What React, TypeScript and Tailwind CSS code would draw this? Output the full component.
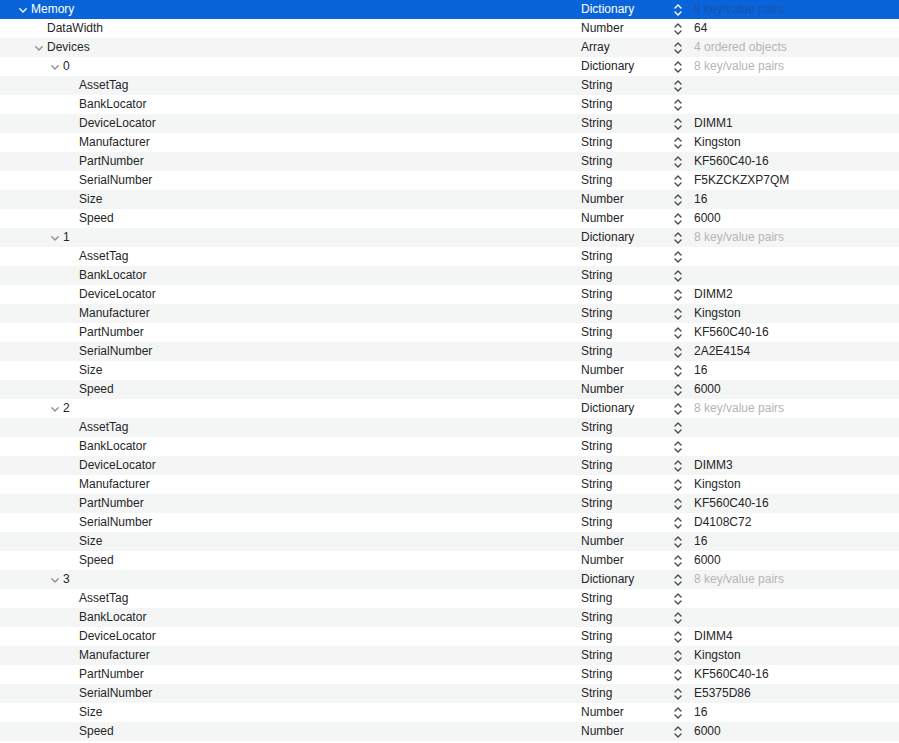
import React from 'react';

type Row = {
  key: string;
  level: number;
  type: string;
  value?: string;
  hint?: string;
  open?: boolean;
};

const devices = [
  { loc: 'DIMM1', serial: 'F5KZCKZXP7QM' },
  { loc: 'DIMM2', serial: '2A2E4154' },
  { loc: 'DIMM3', serial: 'D4108C72' },
  { loc: 'DIMM4', serial: 'E5375D86' },
];

const rows: Row[] = [
  { key: 'Memory', level: 0, type: 'Dictionary', hint: '8 key/value pairs', open: true },
  { key: 'DataWidth', level: 1, type: 'Number', value: '64' },
  { key: 'Devices', level: 1, type: 'Array', hint: '4 ordered objects', open: true },
  ...devices.flatMap((d, i): Row[] => [
    { key: String(i), level: 2, type: 'Dictionary', hint: '8 key/value pairs', open: true },
    { key: 'AssetTag', level: 3, type: 'String', value: '' },
    { key: 'BankLocator', level: 3, type: 'String', value: '' },
    { key: 'DeviceLocator', level: 3, type: 'String', value: d.loc },
    { key: 'Manufacturer', level: 3, type: 'String', value: 'Kingston' },
    { key: 'PartNumber', level: 3, type: 'String', value: 'KF560C40-16' },
    { key: 'SerialNumber', level: 3, type: 'String', value: d.serial },
    { key: 'Size', level: 3, type: 'Number', value: '16' },
    { key: 'Speed', level: 3, type: 'Number', value: '6000' },
  ]),
];

const indent = ['pl-[31px]', 'pl-[47px]', 'pl-[63px]', 'pl-[79px]'];

const Disclosure = ({ selected }: { selected: boolean }) => (
  <svg width="8" height="5" viewBox="0 0 8 5" className="absolute -ml-[12px] mt-[1px]">
    <path
      d="M0.8 0.8 L4 4 L7.2 0.8"
      fill="none"
      stroke={selected ? '#ffffff' : '#8c8c8c'}
      strokeWidth="1.3"
      strokeLinecap="round"
      strokeLinejoin="round"
    />
  </svg>
);

const Stepper = ({ selected }: { selected: boolean }) => (
  <svg width="8" height="12" viewBox="0 0 8 12">
    <path
      d="M1 4 L4 1 L7 4 M1 8 L4 11 L7 8"
      fill="none"
      stroke={selected ? '#ffffff' : '#4a4a4a'}
      strokeWidth="1.4"
      strokeLinecap="round"
      strokeLinejoin="round"
    />
  </svg>
);

export default function App() {
  return (
    <div className="w-[899px] h-[743px] bg-white overflow-hidden text-[12px] text-[#262626] font-['Liberation_Sans',Arial,sans-serif]">
      {rows.map((r, i) => {
        const selected = i === 0;
        const bg = selected ? 'bg-[#0964d9] text-white' : i % 2 === 0 ? 'bg-[#f4f5f5]' : 'bg-white';
        return (
          <div key={i} className={`flex items-center h-[19px] leading-[19px] ${bg}`}>
            <div className={`w-[581px] flex items-center ${indent[r.level]}`}>
              {r.open && <Disclosure selected={selected} />}
              <span>{r.key}</span>
            </div>
            <div className="w-[93px]">{r.type}</div>
            <div className="w-[20px] flex items-center">
              <Stepper selected={selected} />
            </div>
            <div
              className={
                r.hint
                  ? selected
                    ? 'text-[#1a52b3]'
                    : 'text-[#b5b5b5]'
                  : ''
              }
            >
              {r.hint ?? r.value}
            </div>
          </div>
        );
      })}
    </div>
  );
}
